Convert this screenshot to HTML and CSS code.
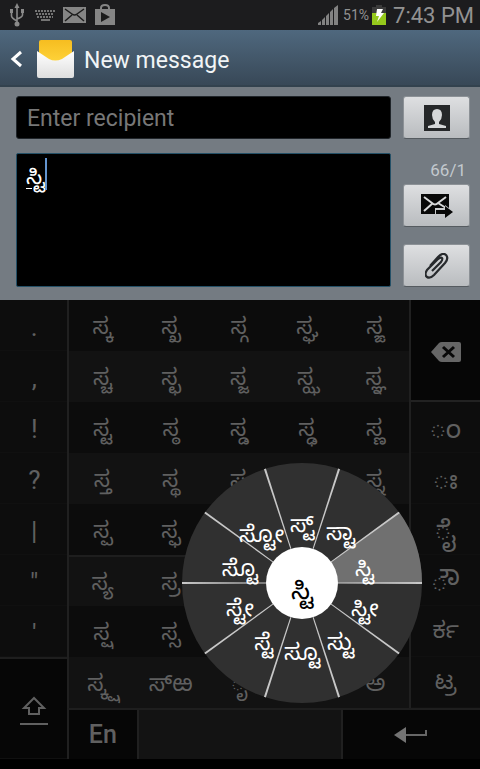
FILE: index.html
```html
<!DOCTYPE html>
<html lang="kn">
<head>
<meta charset="utf-8">
<meta name="viewport" content="width=device-width, initial-scale=1">
<title>New message</title>
<link rel="stylesheet" href="styles.css">
</head>
<body>
<div class="status">
  <div class="status-group">
    <svg width="16" height="24" viewBox="0 0 16 24" fill="none" stroke="#8a8a8a" stroke-width="1.6"><path d="M8 3v18M2.500 9v4q0 2 5.500 5M13.500 9v3q0 2-5.500 4"/><path d="M5.500 5L8 0l2.500 5zM1 6h3v4H1zM12 6h3v4h-3z" fill="#8a8a8a" stroke="none"/><circle cx="8" cy="21" r="2.500" fill="#8a8a8a" stroke="none"/></svg>
    <svg width="20" height="12" viewBox="0 0 20 12" stroke="#747474" stroke-width="2" fill="none"><path d="M0 2h20M1 5h18M2 8h16" stroke-dasharray="2 1"/><path d="M6 11h9"/></svg>
    <svg width="23" height="16" viewBox="0 0 23 16"><path fill="#858585" d="M0 0h23v16H0z"/><path d="M2 2l7 5q2.500 2 5 0l7-5M2 14l7-6M21 14l-7-6" fill="none" stroke="#1c1c1c" stroke-width="1.500"/></svg>
    <svg width="22" height="22" viewBox="0 0 22 22"><path d="M7 6V4q0-3 4-3t4 3v2" fill="none" stroke="#858585" stroke-width="2"/><path d="M1 5h20v16H1z" fill="#858585"/><path d="M7 8l9 5-9 5z" fill="#1c1c1c"/></svg>
  </div>
  <div class="status-group status-right">
    <svg width="20" height="20" viewBox="0 0 20 20" fill="#828282"><path d="M0 20v-2l3-2v4zM4 20v-5l3-3v8zM8 20V11l3-3v12zM12 20V7l3-3v16zM16 20V3l4-3v20z"/></svg>
    <span class="battery-text">51%</span>
    <svg width="14" height="20" viewBox="0 0 14 20"><path fill="#3b3b3b" d="M4 0h6v2h4v18H0V2h4z"/><path fill="#95c91c" d="M0 8h14v12H0z"/><path fill="#fff" d="M5 4h6l-2 4h3l-7 9 2-6H4z"/></svg>
    <span class="clock">7:43 PM</span>
  </div>
</div>
<header class="titlebar">
  <button class="back" aria-label="Back"><svg width="12" height="18" viewBox="0 0 12 18"><path d="M11 2L3 9l8 7" fill="none" stroke="#fff" stroke-width="3"/></svg></button>
  <svg width="37" height="38" viewBox="0 0 37 38"><defs><linearGradient id="paper" x2="0" y2="1"><stop stop-color="#f6bd20"/><stop offset="1" stop-color="#ffd53c"/></linearGradient><linearGradient id="env" x2="0" y2="1"><stop stop-color="#fff"/><stop offset="1" stop-color="#dedede"/></linearGradient></defs><path fill="url(#paper)" d="M2 2q0-2 2-2h29q2 0 2 2v22H2z"/><path fill="url(#env)" d="M0 11l12 8q6 3 13 0l12-8v25q0 2-2 2H2q-2 0-2-2z"/></svg>
  <h1>New message</h1>
</header>
<main class="compose">
  <input class="recipient" type="text" placeholder="Enter recipient" aria-label="Recipient">
  <button class="tool" aria-label="Contacts"><svg width="26" height="26" viewBox="0 0 26 26"><path fill="#252729" d="M0 0h26v26H0z"/><path fill="#d5d7d9" d="M8 10q0-6 5-6t5 6q0 4-3 7v2l7 2v2H4v-2l7-2v-2q-3-3-3-7z"/></svg></button>
  <div class="message" role="textbox" aria-label="Message" aria-multiline="true" contenteditable="true" spellcheck="false"><span class="typed">ಸ್ಟಿ</span><span class="caret"></span></div>
  <div class="side">
    <span class="count">66/1</span>
    <button class="tool" aria-label="Send"><svg width="32" height="24" viewBox="0 0 32 24"><path fill="#080808" d="M0 0h28v20H0z"/><path d="M3 3l8 6q3 3 6 0l8-6M3 17l9-8M25 14l-8-5" stroke="#d8d9da" stroke-width="2" fill="none"/><path fill="#c8cacc" d="M14 14h10v-3l8 6h-1v3h-17z"/><path fill="#080808" d="M15 16h9v-4l8 6-8 6v-4h-9z"/></svg></button>
    <button class="tool" aria-label="Attach"><svg width="24" height="26" viewBox="0 0 24 26"><path d="M5 13l8-9q5-5 8-2t-1 8L9 22q-4 4-7 2t0-7L13 6q3-2 4-1t-1 4l-9 9" fill="none" stroke="#272a2d" stroke-width="2.200"/></svg></button>
  </div>
</main>
<section class="keyboard" aria-label="Keyboard">
  <div class="side-keys">
    <button>.</button><button>,</button><button>!</button><button>?</button><button>|</button><button>"</button><button>'</button>
    <button class="shift" aria-label="Shift"><svg width="30" height="30" viewBox="0 0 30 30" fill="none" stroke="#606060" stroke-width="2"><path d="M15 2L5 12h5v6h10v-6h5zM1 28h28"/></svg></button>
  </div>
  <div class="letters">
    <button>ಸ್ಕ</button><button>ಸ್ಖ</button><button>ಸ್ಗ</button><button>ಸ್ಘ</button><button>ಸ್ಙ</button>
    <button>ಸ್ಚ</button><button>ಸ್ಛ</button><button>ಸ್ಜ</button><button>ಸ್ಝ</button><button>ಸ್ಞ</button>
    <button>ಸ್ಟ</button><button>ಸ್ಠ</button><button>ಸ್ಡ</button><button>ಸ್ಢ</button><button>ಸ್ಣ</button>
    <button>ಸ್ತ</button><button>ಸ್ಥ</button><button>ಸ್ದ</button><button>ಸ್ಧ</button><button>ಸ್ನ</button>
    <button>ಸ್ಪ</button><button>ಸ್ಫ</button><button>ಸ್ಬ</button><button>ಸ್ಭ</button><button>ಸ್ಮ</button>
    <button>ಸ್ಯ</button><button>ಸ್ರ</button><button>ಸ್ಲ</button><button>ಸ್ವ</button><button>ಸ್ಶ</button>
    <button>ಸ್ಷ</button><button>ಸ್ಸ</button><button>ಸ್ಹ</button><button>ಸ್ಳ</button><button>ಸ್ೞ</button>
    <button>ಸ್ಕ್ಷ</button><button>ಸ್&zwnj;ಱ</button><button>◌ೃ</button><button>ಽ</button><button>ಅ</button>
  </div>
  <div class="side-keys right">
    <button class="delete" aria-label="Delete"><svg width="30" height="20" viewBox="0 0 30 20"><path fill="#666" d="M0 10L8 1q1-1 3-1h17q2 0 2 2v16q0 2-2 2H11q-2 0-3-1z"/><path d="M12 5l11 10M23 5L12 15" stroke="#080808" stroke-width="3"/></svg></button>
    <button class="sign">◌ಂ</button><button class="sign">◌ಃ</button><button class="sign">◌ೈ</button><button class="sign">◌ೌ</button><button>ರ್ಕ</button><button>ಟ್ರ</button>
  </div>
  <div class="bottom">
    <button class="lang">En</button>
    <button class="space" aria-label="Space"></button>
    <button class="enter" aria-label="Enter"><svg width="34" height="18" viewBox="0 0 34 18"><path d="M10 9h22V4" fill="none" stroke="#666" stroke-width="2"/><path fill="#737373" d="M0 9l12-8v16z"/></svg></button>
  </div>
  <div class="wheel">
    <svg class="wheel-art" viewBox="-120 -120 240 240"><circle r="120" fill="#303030"/><path d="M0 0L97-71A120 120 0 0 1 120 0z" fill="#707070"/><g fill="#c8c8c8"><path id="ray" d="M36-.5L120-1V1L36 .5z"/><use href="#ray" transform="rotate(36)"/><use href="#ray" transform="rotate(72)"/><use href="#ray" transform="rotate(108)"/><use href="#ray" transform="rotate(144)"/><use href="#ray" transform="rotate(180)"/><use href="#ray" transform="rotate(216)"/><use href="#ray" transform="rotate(252)"/><use href="#ray" transform="rotate(288)"/><use href="#ray" transform="rotate(324)"/></g><circle r="36" fill="#fff"/></svg>
    <button class="w0">ಸ್ಟ್</button><button class="w1">ಸ್ಟಾ</button><button class="w2">ಸ್ಟಿ</button><button class="w3">ಸ್ಟೀ</button><button class="w4">ಸ್ಟು</button><button class="w5">ಸ್ಟೂ</button><button class="w6">ಸ್ಟೆ</button><button class="w7">ಸ್ಟೇ</button><button class="w8">ಸ್ಟೊ</button><button class="w9">ಸ್ಟೋ</button>
    <button class="hub">ಸ್ಟಿ</button>
  </div>
</section>
</body>
</html>
```
FILE: styles.css
```css
* { box-sizing: border-box; }
body {
  margin: 0;
  min-height: 100vh;
  background: #000;
  font-family: Roboto, "Noto Sans Kannada", "Noto Sans", sans-serif;
}
button {
  margin: 0;
  padding: 0;
  border: 0;
  background: none;
  font: inherit;
  color: inherit;
}
svg { display: block; flex: none; }
.status {
  display: flex;
  align-items: center;
  justify-content: space-between;
  height: 30px;
  padding: 0 6px 0 9px;
  background: #1c1c1e;
  color: #929292;
}
.status-group { display: flex; align-items: center; gap: 8px; }
.status-group svg:first-child { margin-right: 2px; }
.status-right { gap: 3px; }
.battery-text { font-size: 14px; }
.clock { font-size: 22px; margin-left: 4px; }
.titlebar {
  display: flex;
  align-items: center;
  height: 57px;
  padding: 2px 10px 0;
  background: linear-gradient(#4f687e, #384857);
  border-bottom: 2px solid #33424e;
  color: #fff;
}
.back { margin-right: 15px; }
.titlebar h1 { margin: 0 0 0 10px; padding-top: 4px; font-size: 23px; font-weight: 400; color: #f1f4f6; }
.compose {
  display: grid;
  grid-template-columns: 1fr 67px;
  grid-template-rows: 43px 134px;
  gap: 14px 12px;
  padding: 9px 10px 13px 16px;
  background: #747b82;
}
.recipient {
  width: 100%;
  padding: 2px 10px 0;
  border: 1px solid #20252a;
  border-radius: 3px;
  background: #000;
  color: #fff;
  font: 23px Roboto, sans-serif;
}
.recipient::placeholder { color: #777; opacity: 1; }
.message {
  display: flex;
  align-items: flex-start;
  padding: 4px 9px;
  border: 1px solid #245067;
  border-radius: 2px;
  background: #000;
  color: #fff;
  font-size: 23px;
  line-height: 38px;
  outline: 0;
}
.typed { text-decoration: underline; text-decoration-thickness: 1px; text-underline-offset: 4px; }
.caret { width: 2px; height: 32px; background: #6394cf; }
.side { display: flex; flex-direction: column; justify-content: space-between; align-items: stretch; }
.count { height: 12px; padding-right: 4px; text-align: right; font-size: 17px; line-height: 34px; color: #c3c9ce; margin-bottom: 2px; }
.tool {
  display: flex;
  align-items: center;
  justify-content: center;
  height: 43px;
  border: 1px solid #8c9196;
  border-bottom-color: #555b60;
  border-radius: 3px;
  background: linear-gradient(#dedfe1, #b9bcbf);
}
.keyboard {
  position: relative;
  display: grid;
  grid-template-columns: 1fr 5fr 1fr;
  grid-template-rows: 408px 51px;
  color: #606060;
  overflow: hidden;
}
.keyboard button { display: flex; align-items: center; justify-content: center; min-width: 0; }
.side-keys {
  display: grid;
  grid-row: 1 / 3;
  grid-auto-rows: 51px;
  background: #0d0d0d;
  font-size: 26px;
}
.side-keys button { border-bottom: 1px solid #101010; padding-top: 4px; }
.side-keys .shift { grid-row: 8 / 10; background: #060606; border-top: 2px solid #1e1e1e; }
.letters {
  display: grid;
  grid-template-columns: repeat(5, 1fr);
  grid-auto-rows: 51px;
  border: solid #202020;
  border-width: 0 2px;
  margin-left: -2px;
  background: linear-gradient(#0c0c0c 50%, #121212 50%) 0 0 / 100% 102px;
  font-size: 23px;
}
.letters button { padding-top: 8px; }
.letters button:nth-child(n+26):nth-child(-n+30) { border-top: 2px solid #1e1e1e; }
.right { grid-column: 3; grid-row: 1; font-size: 23px; }
.side-keys .sign { font-size: 28px; line-height: 40px; }
.side-keys .delete { grid-row: 1 / 3; background: #060606; border-bottom: 2px solid #222; }
.bottom {
  display: grid;
  grid-column: 2 / 4;
  grid-row: 2;
  grid-template-columns: 1fr 3fr 2fr;
  margin-left: -2px;
  border-top: 2px solid #1e1e1e;
  border-left: 2px solid #202020;
  background: #060606;
}
.lang { font-size: 25px; font-weight: 500; }
.bottom .space { background: #131313; border: solid #202020; border-width: 0 2px; }
.wheel {
  position: absolute;
  left: 63%;
  top: 283px;
  width: 240px;
  height: 240px;
  margin: -120px;
  color: #fff;
  font-size: 23px;
}
.wheel-art { width: 100%; height: 100%; }
.wheel button { position: absolute; width: 40px; height: 28px; margin: -14px -20px; line-height: 28px; }
.w0 { left: 50%; top: 26%; }
.w1 { left: 66%; top: 29%; }
.w2 { left: 76%; top: 44%; }
.w3 { left: 76%; top: 61%; }
.w4 { left: 66%; top: 75%; }
.w5 { left: 50%; top: 79%; }
.w6 { left: 34%; top: 75%; }
.w7 { left: 24%; top: 61%; }
.w8 { left: 24%; top: 44%; }
.w9 { left: 33%; top: 30%; }
.wheel .hub { left: 50%; top: 53%; color: #000; font-size: 27px; }
```
